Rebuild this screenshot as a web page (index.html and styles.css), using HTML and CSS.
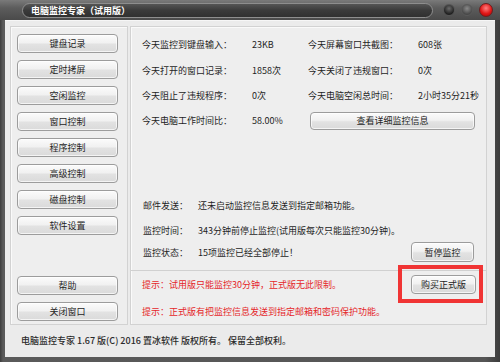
FILE: index.html
```html
<!DOCTYPE html>
<html lang="zh-CN">
<head>
<meta charset="utf-8">
<title>电脑监控专家（试用版）</title>
<link rel="stylesheet" href="styles.css">
</head>
<body>
<div class="window">
  <div class="titlebar">
    <div class="title-pill"><span class="title-text">电脑监控专家（试用版）</span></div>
    <div class="winbtns">
      <span class="wb wb-min"></span>
      <span class="wb wb-max"></span>
      <span class="wb wb-close"></span>
    </div>
  </div>
  <div class="client">
    <div class="main">
      <div class="nav">
        <div class="nav-group">
          <button class="btn nav-btn">键盘记录</button>
          <button class="btn nav-btn">定时拷屏</button>
          <button class="btn nav-btn">空闲监控</button>
          <button class="btn nav-btn">窗口控制</button>
          <button class="btn nav-btn">程序控制</button>
          <button class="btn nav-btn">高级控制</button>
          <button class="btn nav-btn">磁盘控制</button>
          <button class="btn nav-btn">软件设置</button>
        </div>
        <div class="nav-group">
          <button class="btn nav-btn">帮助</button>
          <button class="btn nav-btn">关闭窗口</button>
        </div>
      </div>
      <div class="content">
        <div class="content-top">
          <div class="stats">
            <span>今天监控到键盘输入：</span><span>23KB</span>
            <span>今天屏幕窗口共截图：</span><span>608张</span>
            <span>今天打开的窗口记录：</span><span>1858次</span>
            <span>今天关闭了违规窗口：</span><span>0次</span>
            <span>今天阻止了违规程序：</span><span>0次</span>
            <span>今天电脑空闲总时间：</span><span>2小时35分21秒</span>
            <span>今天电脑工作时间比：</span><span>58.00%</span>
            <button class="btn detail-btn">查看详细监控信息</button>
          </div>
          <div class="mail">
            <span>邮件发送：</span><span class="mail-val">还未启动监控信息发送到指定邮箱功能。</span>
            <span>监控时间：</span><span class="mail-val">343分钟前停止监控(试用版每次只能监控30分钟)。</span>
            <span>监控状态：</span><span>15项监控已经全部停止！</span>
            <button class="btn pause-btn">暂停监控</button>
          </div>
        </div>
        <div class="tips">
          <span class="tip">提示：试用版只能监控30分钟，正式版无此限制。</span>
          <span class="highlight"><button class="btn buy-btn">购买正式版</button></span>
          <span class="tip tip-wide">提示：正式版有把监控信息发送到指定邮箱和密码保护功能。</span>
        </div>
      </div>
    </div>
    <div class="footer">电脑监控专家 1.67 版(C) 2016 置冰软件 版权所有。 保留全部权利。</div>
  </div>
</div>
</body>
</html>
```

FILE: styles.css
```css
* { box-sizing: border-box; }
html, body { margin: 0; padding: 0; }
body {
  width: 500px;
  height: 362px;
  overflow: hidden;
  font-family: "Noto Sans CJK SC", "Noto Sans", sans-serif;
  font-size: 9px;
  color: #1e1e1e;
}
.window {
  width: 500px;
  height: 362px;
  display: flex;
  flex-direction: column;
  background: linear-gradient(90deg, #3c3c3c 0, #5a5a5a 3px, #555 97%, #3c3c3c 100%);
}
.titlebar {
  height: 20px;
  flex: none;
  display: flex;
  align-items: center;
  background: linear-gradient(#7a7a7a, #5c5c5c 40%, #4a4a4a);
  padding: 0 0 0 22px;
}
.title-pill {
  width: 411px;
  height: 15px;
  border-radius: 8px;
  border: 1px solid #8e8e8e;
  background: linear-gradient(#555, #3a3a3a 50%, #303030);
  display: flex;
  align-items: center;
  padding-left: 8px;
}
.title-text {
  color: #fff;
  font-weight: bold;
  font-size: 9px;
  line-height: 1;
}
.winbtns {
  display: flex;
  align-items: center;
  margin-left: 10px;
  gap: 6px;
}
.wb {
  display: block;
  width: 12px;
  height: 12px;
  border-radius: 50%;
}
.wb-min { background: radial-gradient(circle at 50% 35%, #6a6a6a, #1e1e1e 70%); border: 1px solid #555; }
.wb-max { background: radial-gradient(circle at 50% 35%, #8a8a8a, #484848 70%); border: 1px solid #5a5a5a; }
.wb-close {
  width: 14px; height: 14px;
  background: radial-gradient(circle at 50% 35%, #ff8080, #e01818 55%, #a00 100%);
  border: 1px solid #6a2020;
}
.client {
  flex: 1;
  margin: 0 5px 5px 5px;
  background: #ebebeb;
  border-top: 1px solid #f6f6f6;
  display: flex;
  flex-direction: column;
  padding: 5px 8px 0 5px;
}
.main {
  height: 299px;
  display: flex;
  gap: 2px;
}
.nav {
  width: 118px;
  border: 1px solid #d2d2d2;
  box-shadow: inset 1px 1px 0 #fafafa;
  background: #eeeeee;
  display: flex;
  flex-direction: column;
  justify-content: space-between;
  padding: 7px 0 3px 6px;
}
.nav-group {
  display: flex;
  flex-direction: column;
  gap: 7px;
}
.btn {
  font-family: inherit;
  font-size: 9px;
  color: #1e1e1e;
  border: 1px solid #9c9c9c;
  border-radius: 4px;
  background: linear-gradient(#fbfbfb, #f1f1f1 45%, #e2e2e2 55%, #dadada);
  box-shadow: inset 0 0 0 1px rgba(255,255,255,0.7);
  padding: 0;
  line-height: 1;
  display: flex;
  align-items: center;
  justify-content: center;
}
.nav-btn { width: 101px; height: 19px; }
.content {
  flex: 1;
  min-width: 0;
  border: 1px solid #d2d2d2;
  box-shadow: inset 1px 1px 0 #fafafa;
  background: #eeeeee;
  display: flex;
  flex-direction: column;
}
.content-top {
  height: 244px;
  border-bottom: 1px solid #d0d0d0;
  display: flex;
  flex-direction: column;
  padding: 4px 12px 8px 11px;
}
.stats {
  display: grid;
  grid-template-columns: 110px 56px 110px auto;
  grid-template-rows: 26px 26px 25px 25px;
  align-items: center;
  white-space: nowrap;
}
.detail-btn {
  grid-column: 3 / 5;
  width: 165px;
  height: 18px;
  margin-left: 2px;
}
.mail {
  margin-top: auto;
  display: grid;
  grid-template-columns: 55px 1fr auto;
  grid-template-rows: 26px 24px 20px;
  align-items: center;
  padding-left: 1px;
  white-space: nowrap;
}
.mail-val { grid-column: 2 / 4; }
.pause-btn { width: 63px; height: 20px; }
.tips {
  flex: 1;
  display: grid;
  grid-template-columns: 1fr auto;
  grid-template-rows: 19px 26px;
  row-gap: 4px;
  align-items: center;
  padding: 4px 10px 0 11px;
  white-space: nowrap;
}
.tip { color: #e5262a; }
.tip-wide { grid-column: 1 / 3; }
.highlight {
  position: relative;
  display: block;
}
.highlight::after {
  content: "";
  position: absolute;
  top: -10px;
  left: -13px;
  right: -7px;
  bottom: -9px;
  border: 4px solid #f03434;
  pointer-events: none;
}
.buy-btn { width: 65px; height: 19px; }
.footer {
  flex: 1;
  display: flex;
  align-items: center;
  padding-left: 11px;
  padding-bottom: 1px;
  color: #2a2a2a;
  font-weight: 500;
  white-space: pre;
}
```
